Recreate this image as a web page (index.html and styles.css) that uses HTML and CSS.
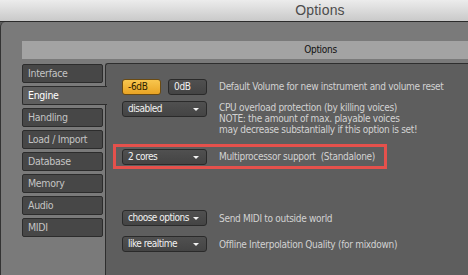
FILE: index.html
```
<!DOCTYPE html>
<html lang="en">
<head>
    <meta charset="UTF-8">
    <title>Options</title>
    <link rel="stylesheet" href="styles.css">
</head>
<body>
    <div class="window">
        <div class="titlebar">Options</div>
        <div class="frame">
            <div class="header">Options</div>
            <div class="main">
                <div class="tabs">
                    <div class="tab">Interface</div>
                    <div class="tab active">Engine</div>
                    <div class="tab">Handling</div>
                    <div class="tab">Load / Import</div>
                    <div class="tab">Database</div>
                    <div class="tab">Memory</div>
                    <div class="tab">Audio</div>
                    <div class="tab">MIDI</div>
                </div>
                <div class="panel">
                    <div class="row row-volume">
                        <div class="control">
                            <span class="btn on">-6dB</span>
                            <span class="btn">0dB</span>
                        </div>
                        <div class="desc">Default Volume for new instrument and volume reset</div>
                    </div>
                    <div class="row row-cpu">
                        <div class="control">
                            <span class="select">disabled</span>
                        </div>
                        <div class="desc">CPU overload protection (by killing voices)<br>NOTE: the amount of max. playable voices<br>may decrease substantially if this option is set!</div>
                    </div>
                    <div class="row row-mp">
                        <div class="control">
                            <span class="select">2 cores</span>
                        </div>
                        <div class="desc">Multiprocessor support&nbsp; (Standalone)</div>
                    </div>
                    <div class="row row-midi">
                        <div class="control">
                            <span class="select">choose options</span>
                        </div>
                        <div class="desc">Send MIDI to outside world</div>
                    </div>
                    <div class="row row-interp">
                        <div class="control">
                            <span class="select">like realtime</span>
                        </div>
                        <div class="desc">Offline Interpolation Quality (for mixdown)</div>
                    </div>
                </div>
            </div>
        </div>
    </div>
</body>
</html>
```

FILE: styles.css
```
body {
    margin: 0;
    width: 468px;
    height: 275px;
    overflow: hidden;
    background: #5e5e5e;
    font-family: "DejaVu Sans Condensed", "DejaVu Sans", sans-serif;
    font-size: 10px;
    letter-spacing: -0.3px;
}
.window {
    width: 640px;
    height: 275px;
    display: flex;
    flex-direction: column;
}
.titlebar {
    height: 21px;
    line-height: 21px;
    text-align: center;
    font-family: "Liberation Sans", sans-serif;
    font-size: 14px;
    letter-spacing: 0.2px;
    color: #4c4c4c;
    background: linear-gradient(#ececec, #c9c9c9);
    border-bottom: 1px solid #2a2a2a;
}
.frame {
    flex: 1;
    display: flex;
    flex-direction: column;
    background: #7a7a7a;
    border-left: 1px solid #333;
    border-top-left-radius: 5px;
    padding-top: 19px;
}
.header {
    margin-left: 21px;
    margin-right: 21px;
    height: 18px;
    line-height: 18px;
    text-align: center;
    background: #a3a3a3;
    color: #111;
}
.main {
    flex: 1;
    display: flex;
    margin-top: 4px;
}
.tabs {
    width: 83px;
    padding-left: 21px;
    padding-top: 1px;
    display: flex;
    flex-direction: column;
    gap: 3px;
}
.tab {
    box-sizing: border-box;
    width: 81px;
    height: 19px;
    line-height: 17px;
    padding-left: 5px;
    background: #474747;
    border: 1px solid #2c2c2c;
    border-radius: 2px;
    color: #c4c4c4;
    font-size: 10.5px;
}
.tab.active {
    position: relative;
    z-index: 1;
    width: 85px;
    background: #5e5e5e;
    border-right: none;
    border-radius: 2px 0 0 2px;
    color: #fff;
}
.panel {
    flex: 1;
    background: #5e5e5e;
    border-left: 1px solid #2e2e2e;
    border-top: 1px solid #2e2e2e;
    border-top-left-radius: 3px;
    padding-top: 15px;
    padding-left: 16px;
}
.row {
    display: flex;
    align-items: flex-start;
}
.control {
    width: 85px;
    display: flex;
    gap: 7px;
    flex-shrink: 0;
}
.desc {
    margin-left: 12px;
    color: #d2d2d2;
    line-height: 11px;
    white-space: nowrap;
}
.row-volume .desc {
    padding-top: 2px;
}
.row-cpu {
    margin-top: 6px;
}
.row-cpu .desc {
    padding-top: 1px;
}
.row-mp {
    box-sizing: border-box;
    margin-top: 9px;
    margin-left: -9px;
    width: 274px;
    height: 25px;
    padding: 0 0 0 6px;
    border: 3px solid #e5514c;
    align-items: center;
}
.row-midi {
    margin-top: 41px;
    align-items: center;
}
.row-interp {
    margin-top: 10px;
    align-items: center;
}
.btn {
    flex: 1;
    height: 16px;
    line-height: 14px;
    box-sizing: border-box;
    padding-left: 5px;
    background: linear-gradient(#505050, #444);
    border: 1px solid #2a2a2a;
    border-radius: 3px;
    color: #f2f2f2;
}
.btn.on {
    background: linear-gradient(#f8c64e, #e9a424);
    border-color: #6a4a12;
    color: #2e2200;
}
.select {
    position: relative;
    width: 85px;
    height: 16px;
    line-height: 14px;
    box-sizing: border-box;
    padding-left: 5px;
    background: linear-gradient(#505050, #444);
    border: 1px solid #2a2a2a;
    border-radius: 3px;
    color: #f2f2f2;
    letter-spacing: -0.5px;
}
.select::after {
    content: "";
    position: absolute;
    right: 7px;
    top: 6px;
    border-left: 3px solid transparent;
    border-right: 3px solid transparent;
    border-top: 3px solid #f2f2f2;
}
```
